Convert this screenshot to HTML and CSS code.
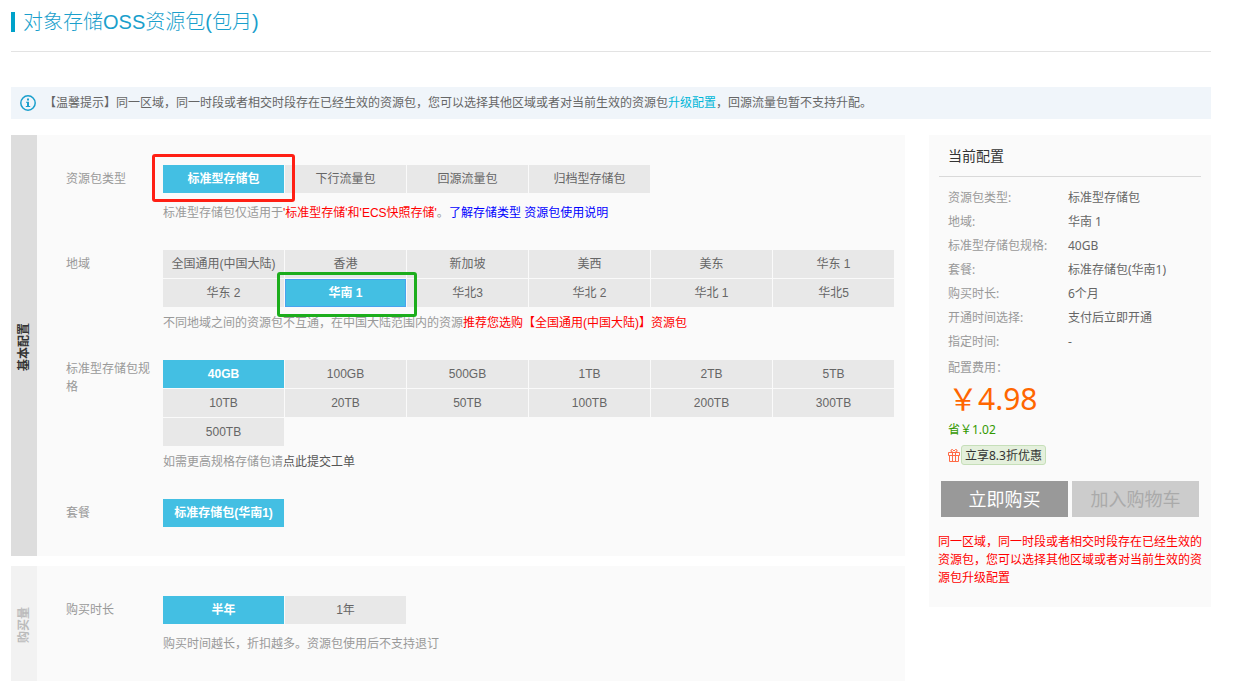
FILE: index.html
```html
<!DOCTYPE html>
<html lang="zh-CN">
<head>
<meta charset="utf-8">
<title>对象存储OSS资源包(包月)</title>
<link rel="stylesheet" href="styles.css">
</head>
<body>
<div class="page">
  <header class="page-header">
    <h1 class="page-title">对象存储OSS资源包(包月)</h1>
  </header>

  <div class="notice">
    <svg class="notice-icon" viewBox="0 0 16 16" aria-hidden="true">
      <circle cx="8" cy="8" r="7.2" fill="none" stroke="#1a9fcc" stroke-width="1.5"/>
      <path d="M7 3.6h2v1.8H7zM6 6.8h3v4.2h1.2v1H5.8v-1H7V7.8H6z" fill="#1a9fcc"/>
    </svg>
    <p class="notice-text">【温馨提示】同一区域，同一时段或者相交时段存在已经生效的资源包，您可以选择其他区域或者对当前生效的资源包<a class="notice-link" href="#">升级配置</a>，回源流量包暂不支持升配。</p>
  </div>

  <div class="columns">
    <main class="config">
      <section class="panel">
        <h2 class="panel-tab"><span class="panel-tab-text">基本配置</span></h2>
        <div class="panel-body">
          <div class="row">
            <div class="row-label" id="l-type">资源包类型</div>
            <div class="row-field">
              <div class="options" role="group" aria-labelledby="l-type">
                <div class="marked"><button class="option option-on">标准型存储包</button><span class="mark mark-red"></span></div>
                <button class="option">下行流量包</button>
                <button class="option">回源流量包</button>
                <button class="option">归档型存储包</button>
              </div>
              <p class="hint">标准型存储包仅适用于<span class="warn">'标准型存储'和'ECS快照存储'</span>。<a class="doc-link" href="#">了解存储类型</a> <a class="doc-link" href="#">资源包使用说明</a></p>
            </div>
          </div>
          <div class="row">
            <div class="row-label" id="l-region">地域</div>
            <div class="row-field">
              <div class="options" role="group" aria-labelledby="l-region">
                <button class="option">全国通用(中国大陆)</button>
                <button class="option">香港</button>
                <button class="option">新加坡</button>
                <button class="option">美西</button>
                <button class="option">美东</button>
                <button class="option">华东 1</button>
                <button class="option">华东 2</button>
                <div class="marked"><button class="option option-on option-focus">华南 1</button><span class="mark mark-green"></span></div>
                <button class="option">华北3</button>
                <button class="option">华北 2</button>
                <button class="option">华北 1</button>
                <button class="option">华北5</button>
              </div>
              <p class="hint hint-tight">不同地域之间的资源包不互通，在中国大陆范围内的资源<span class="warn">推荐您选购【全国通用(中国大陆)】资源包</span></p>
            </div>
          </div>
          <div class="row">
            <div class="row-label" id="l-size">标准型存储包规格</div>
            <div class="row-field">
              <div class="options" role="group" aria-labelledby="l-size">
                <button class="option option-on">40GB</button>
                <button class="option">100GB</button>
                <button class="option">500GB</button>
                <button class="option">1TB</button>
                <button class="option">2TB</button>
                <button class="option">5TB</button>
                <button class="option">10TB</button>
                <button class="option">20TB</button>
                <button class="option">50TB</button>
                <button class="option">100TB</button>
                <button class="option">200TB</button>
                <button class="option">300TB</button>
                <button class="option">500TB</button>
              </div>
              <p class="hint hint-tight">如需更高规格存储包请<a class="ticket-link" href="#">点此提交工单</a></p>
            </div>
          </div>
          <div class="row">
            <div class="row-label" id="l-plan">套餐</div>
            <div class="row-field">
              <div class="options" role="group" aria-labelledby="l-plan">
                <button class="option option-on">标准存储包(华南1)</button>
              </div>
            </div>
          </div>
        </div>
      </section>

      <section class="panel">
        <h2 class="panel-tab panel-tab-light"><span class="panel-tab-text">购买量</span></h2>
        <div class="panel-body">
          <div class="row">
            <div class="row-label" id="l-time">购买时长</div>
            <div class="row-field">
              <div class="options" role="group" aria-labelledby="l-time">
                <button class="option option-on">半年</button>
                <button class="option">1年</button>
              </div>
              <p class="hint">购买时间越长，折扣越多。资源包使用后不支持退订</p>
            </div>
          </div>
        </div>
      </section>
    </main>

    <aside class="summary">
      <h2 class="summary-title">当前配置</h2>
      <div class="summary-body">
        <dl class="summary-list">
          <dt>资源包类型:</dt><dd>标准型存储包</dd>
          <dt>地域:</dt><dd>华南 1</dd>
          <dt>标准型存储包规格:</dt><dd>40GB</dd>
          <dt>套餐:</dt><dd>标准存储包(华南1)</dd>
          <dt>购买时长:</dt><dd>6个月</dd>
          <dt>开通时间选择:</dt><dd>支付后立即开通</dd>
          <dt>指定时间:</dt><dd>-</dd>
        </dl>
        <p class="fee-label">配置费用：</p>
        <p class="price">￥4.98</p>
        <p class="saving">省￥1.02</p>
        <p class="promo">
          <svg class="promo-icon" viewBox="0 0 12 13" fill="none" stroke="#ff6a45" aria-hidden="true">
            <path d="M.5 3.500h11v3H.5zM1.500 6.500v6h9v-6M4.500 3.500v9M7.500 3.500v9M5.500 3.500 3 2.500V1l1.500-.5L6 2 7.500.5 9 1v1.500L6.500 3.500"/>
          </svg>
          <span class="promo-tag">立享8.3折优惠</span>
        </p>
      </div>
      <div class="actions">
        <button class="action action-buy">立即购买</button>
        <button class="action action-cart" disabled>加入购物车</button>
      </div>
      <p class="summary-warning">同一区域，同一时段或者相交时段存在已经生效的资源包，您可以选择其他区域或者对当前生效的资源包升级配置</p>
    </aside>
  </div>
</div>
</body>
</html>
```

FILE: styles.css
```css
* {
  box-sizing: border-box;
}

body,
h1,
h2,
p,
dl,
dd {
  margin: 0;
}

body {
  background: #fff;
  color: #666;
  font: 12px/18px "Liberation Sans", "Noto Sans CJK SC", sans-serif;
}

button {
  border: 0;
  padding: 0;
  font: inherit;
}

a {
  text-decoration: none;
}

.page {
  padding: 0 36px 8px 11px;
}

.page-header {
  padding: 12px 0 19px;
  border-bottom: 1px solid #e3e3e3;
}

.page-title {
  border-left: 4px solid #00a2ca;
  padding-left: 8px;
  color: #1a9fcc;
  font-size: 20px;
  font-weight: 300;
  line-height: 20px;
}

.notice {
  display: flex;
  align-items: center;
  gap: 8px;
  min-height: 32px;
  margin: 35px 0 16px;
  padding: 0 9px;
  background: #f0f5fa;
}

.notice-icon {
  flex: none;
  width: 16px;
  height: 16px;
}

.notice-link {
  color: #00b7d8;
}

.columns {
  display: flex;
  align-items: flex-start;
  gap: 24px;
}

.config {
  display: flex;
  flex: 1;
  flex-direction: column;
  gap: 10px;
  min-width: 0;
}

.panel {
  display: flex;
  background: #fafafa;
}

.panel-tab {
  display: flex;
  flex: none;
  align-items: center;
  justify-content: center;
  width: 26px;
  padding-top: 3px;
  background: #ddd;
  color: #333;
  font-size: 12px;
  font-weight: 700;
}

.panel-tab-light {
  background: #f2f2f2;
  color: #bbb;
}

.panel-tab-text {
  writing-mode: vertical-rl;
  text-orientation: sideways;
  transform: rotate(180deg);
}

.panel-body {
  flex: 1;
  padding: 30px 0 0 29px;
}

.row {
  display: flex;
  align-items: flex-start;
  gap: 12px;
  padding-bottom: 29px;
}

.row-label {
  display: flex;
  flex: none;
  align-items: center;
  width: 85px;
  min-height: 28px;
  color: #999;
}

.row-field {
  flex: 1;
}

.options {
  display: flex;
  flex-wrap: wrap;
  gap: 1px;
}

.option {
  display: block;
  width: 121px;
  height: 28px;
  background: #e8e8e8;
  color: #666;
}

.option-on {
  background: #43bfe3;
  color: #fff;
  font-weight: 700;
}

.option-focus {
  border: 1px solid #4aa3ee;
}

.marked {
  position: relative;
}

.mark {
  position: absolute;
  z-index: 1;
  border: 3px solid;
  border-radius: 3px;
  pointer-events: none;
}

.mark-red {
  inset: -11px -11px -9px;
  border-color: #ff1f14;
}

.mark-green {
  inset: -7px -11px -10px -8px;
  border-color: #1cad1c;
}

.hint {
  margin: 11px 0 -1px;
  color: #999;
}

.hint-tight {
  margin-top: 7px;
}

.warn {
  color: #f00;
}

.doc-link {
  color: #00f;
}

.ticket-link {
  color: #555;
}

.summary {
  flex: none;
  width: 282px;
  padding: 0 9px 20px;
  background: #fafafa;
  font-family: "Noto Sans", "Noto Sans CJK SC", sans-serif;
}

.summary-title {
  margin: 0 1px;
  padding: 0 9px;
  border-bottom: 1px solid #d9d9d9;
  color: #333;
  font-size: 14px;
  font-weight: 400;
  line-height: 41px;
}

.summary-body {
  padding: 9px 10px 0;
}

.summary-list {
  display: grid;
  grid-template-columns: 120px 1fr;
  line-height: 24px;
}

.summary-list dt,
.fee-label {
  color: #999;
}

.fee-label {
  margin-top: 5px;
}

.price {
  color: #f60;
  font-size: 30px;
  line-height: 44px;
}

.saving {
  color: #390;
}

.promo {
  display: flex;
  align-items: center;
  gap: 1px;
  margin-top: 6px;
}

.promo-icon {
  width: 12px;
  height: 13px;
}

.promo-tag {
  padding: 1px 3px 0;
  border: 1px solid #c6dfb9;
  border-radius: 3px;
  background: #e4f0dc;
  color: #333;
  line-height: 17px;
}

.actions {
  display: flex;
  gap: 4px;
  margin: 16px 3px;
}

.action {
  flex: 1;
  height: 36px;
  font-size: 18px;
}

.action-buy {
  background: #999;
  color: #fff;
}

.action-cart {
  background: #ccc;
  color: #aaa;
}

.summary-warning {
  color: #f00;
}
```
